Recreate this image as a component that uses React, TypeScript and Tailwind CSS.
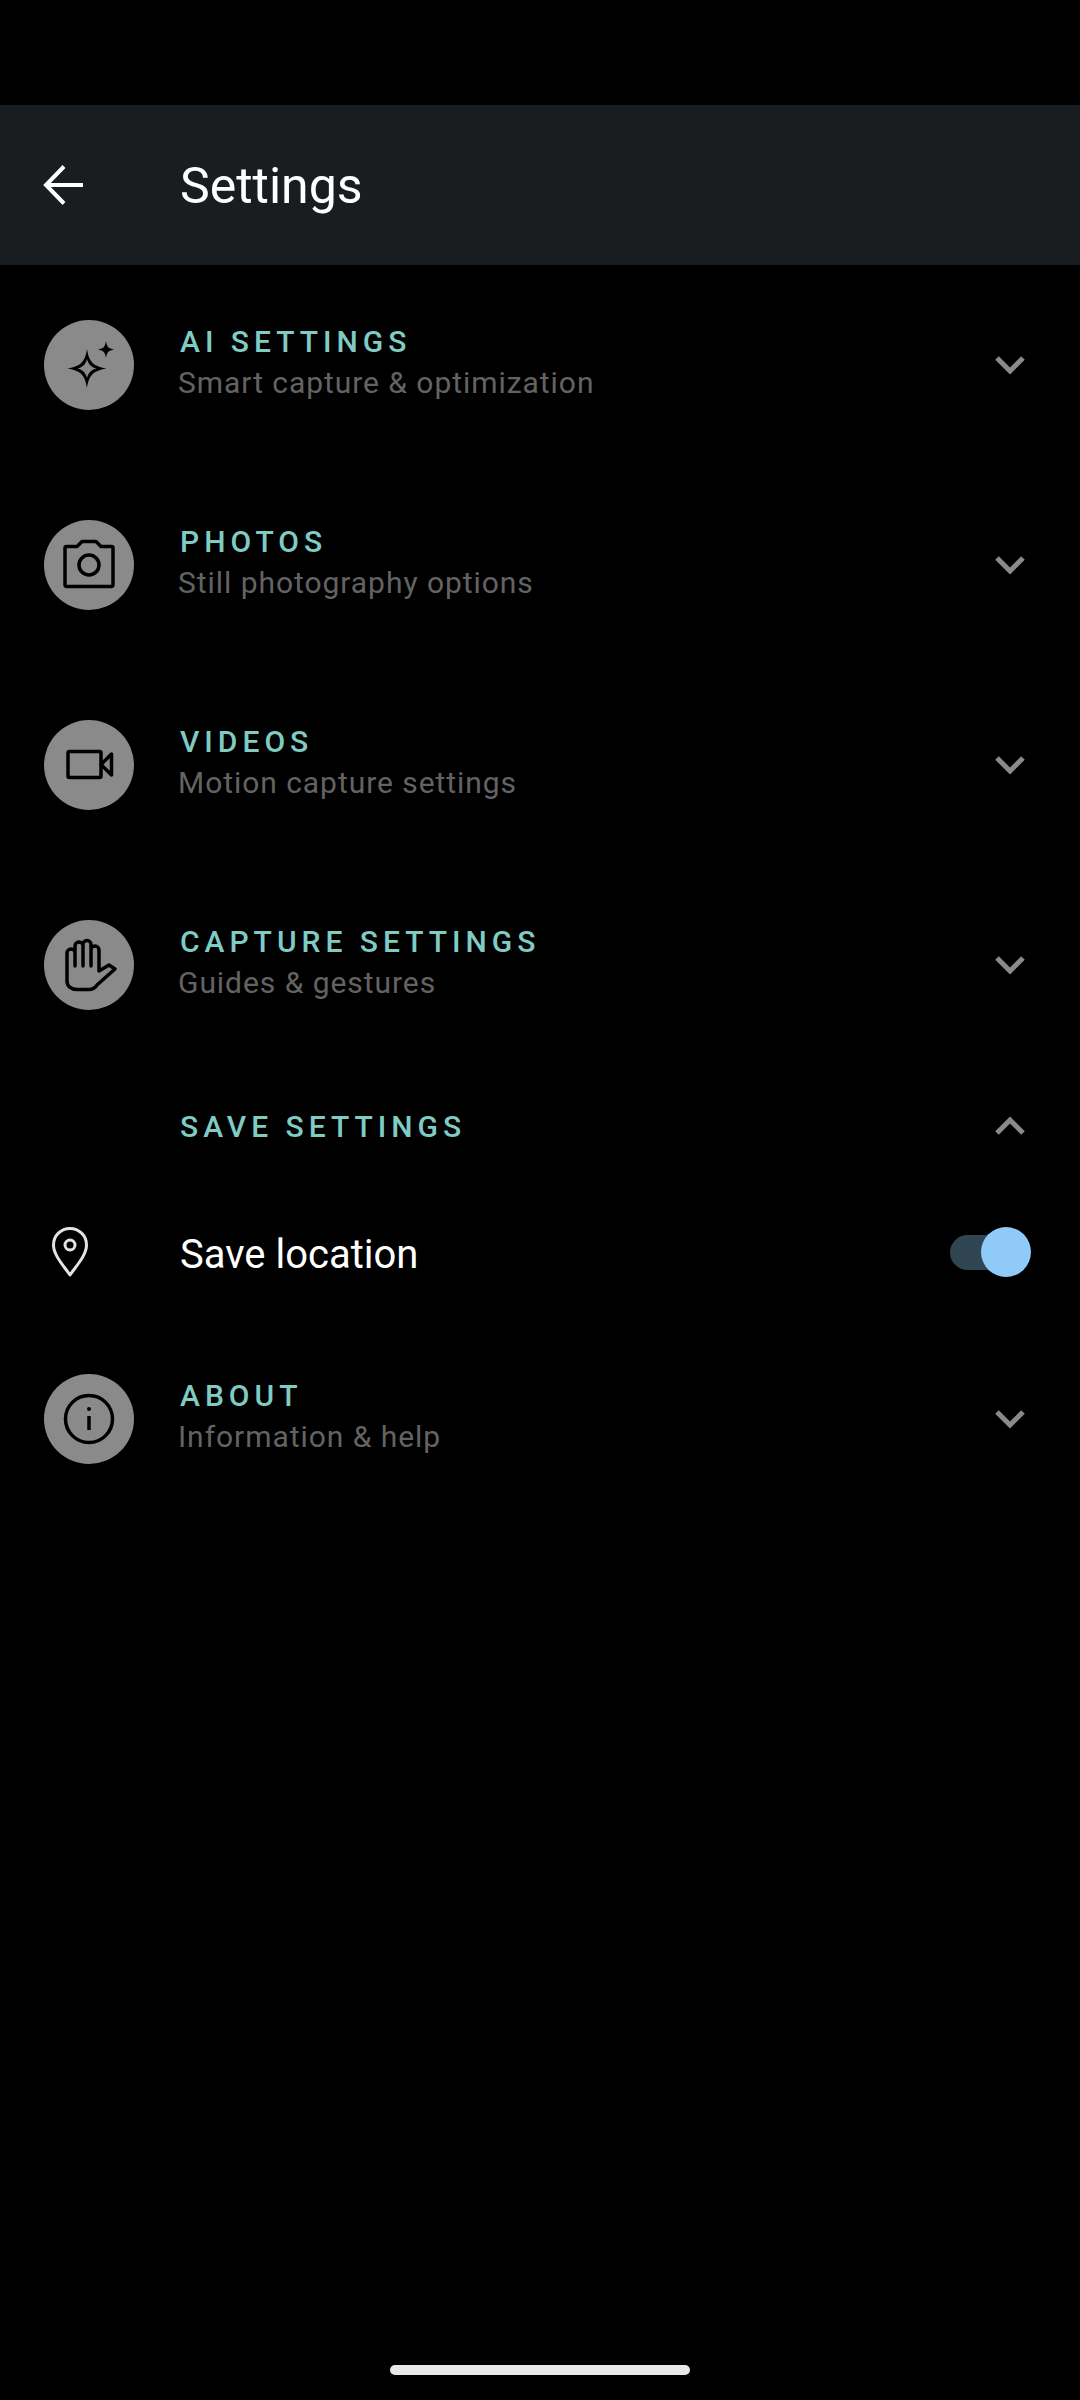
const rowFont = { fontFamily: "Roboto, sans-serif" };

const SparkleIcon = () => (
  <svg width="60" height="60" viewBox="0 0 60 60" fill="#000" fillRule="evenodd">
    <path d="M28 14 C30 26 33 31 47.500 33.500 C33 36 30 41 28 53 C26 41 23 36 8.500 33.500 C23 31 26 26 28 14 Z M28 24 C26.500 29.500 24 32 18.500 33.500 C24 35 26.500 37.500 28 43 C29.500 37.500 32 35 37.500 33.500 C32 32 29.500 29.500 28 24 Z" />
    <path d="M47 6 C48 12 49.500 13.500 55 14.500 C49.500 15.500 48 17 47 23 C46 17 44.500 15.500 39 14.500 C44.500 13.500 46 12 47 6 Z" />
  </svg>
);

const CameraIcon = () => (
  <svg width="60" height="60" viewBox="0 0 60 60" fill="none" stroke="#000" strokeWidth="3.500" strokeLinejoin="round">
    <path d="M6 13 a1.500 1.500 0 0 1 1.500 -1.500 H18 L23 6.500 H37 L42 11.500 H52.500 a1.500 1.500 0 0 1 1.500 1.500 V50 a1.500 1.500 0 0 1 -1.500 1.500 H7.500 a1.500 1.500 0 0 1 -1.500 -1.500 Z" />
    <circle cx="30" cy="30" r="10" />
  </svg>
);

const VideoIcon = () => (
  <svg width="60" height="60" viewBox="0 0 60 60" fill="none" stroke="#000" strokeWidth="3.500" strokeLinejoin="round">
    <rect x="9" y="16.500" width="33" height="26" rx="1.500" />
    <path d="M42 29.500 L52.500 19 V40 Z" />
  </svg>
);

const HandIcon = () => (
  <svg width="60" height="60" viewBox="0 0 60 60" fill="none" stroke="#000" strokeWidth="3.500" strokeLinecap="round" strokeLinejoin="round">
    <path d="M8 46 V18 a4 4 0 0 1 8 0 V31 M16 18 V11 a4 4 0 0 1 8 0 V31 M24 11 V9.500 a4 4 0 0 1 8 0 V31 M32 15 a4 4 0 0 1 8 0 V36 L50 30 L56 34 L38 50 C36 53 33 54.500 30 54.500 H18 C12 54.500 8 51 8 46" />
  </svg>
);

const InfoIcon = () => (
  <svg width="60" height="60" viewBox="0 0 60 60" fill="none" stroke="#000" strokeWidth="3.500">
    <circle cx="30" cy="30" r="23.500" />
    <path d="M30 27 V41" />
    <circle cx="30" cy="20" r="2" fill="#000" stroke="none" />
  </svg>
);

const PinIcon = () => (
  <svg width="36" height="50" viewBox="0 0 36 50" fill="none" stroke="#e3e3e3" strokeWidth="3" strokeLinejoin="round">
    <path d="M18 48 C11 38 1.500 28 1.500 18 C1.500 8.500 9 1.500 18 1.500 C27 1.500 34.500 8.500 34.500 18 C34.500 28 25 38 18 48 Z" />
    <circle cx="18" cy="18" r="5" />
  </svg>
);

const Chevron = ({ up }: { up?: boolean }) => (
  <svg width="30" height="19" viewBox="0 0 30 19" fill="none" stroke="#8a8a8a" strokeWidth="5">
    <path d={up ? "M2 17 L15 4 L28 17" : "M2 2 L15 15 L28 2"} />
  </svg>
);

const items = [
  { title: "AI SETTINGS", sub: "Smart capture & optimization", icon: <SparkleIcon /> },
  { title: "PHOTOS", sub: "Still photography options", icon: <CameraIcon /> },
  { title: "VIDEOS", sub: "Motion capture settings", icon: <VideoIcon /> },
  { title: "CAPTURE SETTINGS", sub: "Guides & gestures", icon: <HandIcon /> },
];

const Row = ({ title, sub, icon }: { title: string; sub: string; icon: React.ReactNode }) => (
  <div className="h-[200px] flex items-center pl-[44px] pr-[55px]">
    <div className="w-[90px] h-[90px] rounded-full bg-[#8a8a8a] flex items-center justify-center">{icon}</div>
    <div className="ml-[46px] flex-1 pb-[6px]">
      <div className="text-[30px] leading-[41px] tracking-[5px] font-[480] text-[#80cbc4]">{title}</div>
      <div className="-ml-[2px] text-[30px] leading-[41px] tracking-[0.95px] text-[#636363]">{sub}</div>
    </div>
    <Chevron />
  </div>
);

export default function App() {
  return (
    <div className="w-[1080px] h-[2400px] bg-black flex flex-col" style={rowFont}>
      <div className="mt-[105px] h-[160px] bg-[#1a1d20] flex items-center pl-[43px]">
        <svg width="40" height="40" viewBox="0 0 40 40" fill="none" stroke="#fff" strokeWidth="4">
          <path d="M40 20 H3 M21 1.500 L3 20 L21 38.500" />
        </svg>
        <div className="ml-[97px] text-[50px] text-white pt-[2px]">Settings</div>
      </div>

      {items.map((item) => (
        <Row key={item.title} {...item} />
      ))}

      <div className="h-[122px] flex items-center pl-[180px] pr-[55px]">
        <div className="flex-1 text-[30px] tracking-[5px] font-[480] text-[#80cbc4]">SAVE SETTINGS</div>
        <div className="-mt-[2px]">
          <Chevron up />
        </div>
      </div>

      <div className="h-[132px] flex items-center pl-[52px] pr-[49px]">
        <div className="-mt-[3px]">
          <PinIcon />
        </div>
        <div className="ml-[92px] flex-1 text-[40px] text-white pt-[3px]">Save location</div>
        <div className="relative w-[81px] h-[35px] -mt-[1px]">
          <div className="w-[70px] h-[35px] rounded-full bg-[#2f4551]" />
          <div className="absolute right-0 -top-[8px] w-[50px] h-[50px] rounded-full bg-[#90caf9]" />
        </div>
      </div>

      <Row title="ABOUT" sub="Information & help" icon={<InfoIcon />} />

      <div className="mt-auto mb-[25px] mx-auto w-[300px] h-[10px] rounded-full bg-[#e8e8e8]" />
    </div>
  );
}
